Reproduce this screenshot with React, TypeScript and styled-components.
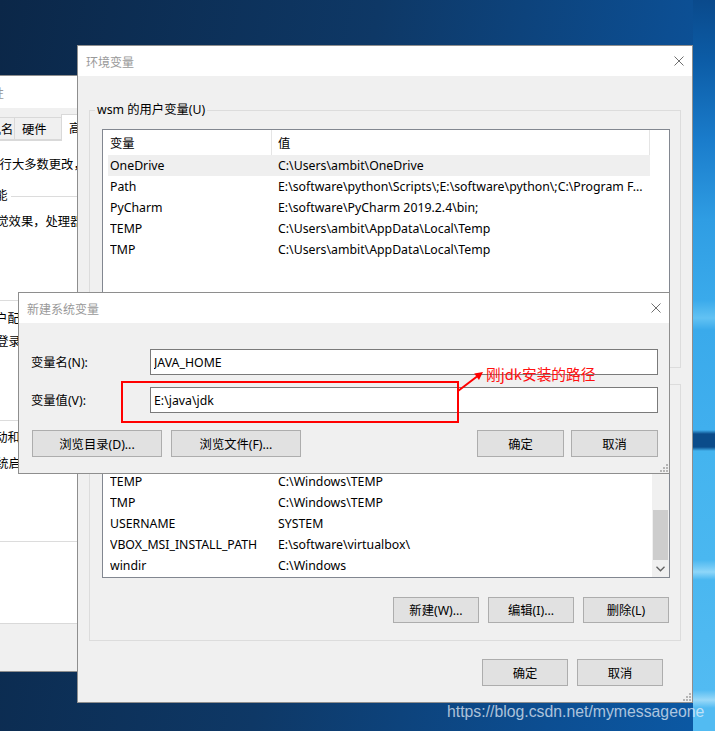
import styled, { createGlobalStyle } from "styled-components"

const GlobalStyle = createGlobalStyle`
  html, body { margin: 0; padding: 0; }
  body {
    font-family: "Noto Sans", "Noto Sans CJK SC", sans-serif;
    font-size: 12.3px;
    color: #000;
  }
  * { box-sizing: border-box; }
`

const Desktop = styled.div`
  position: relative;
  width: 715px;
  height: 731px;
  overflow: hidden;
  background:
    linear-gradient(180deg, #0a4a8c 0px, #0c5ca6 60px, #1a7ccb 140px, #2f9de3 220px, #3aaaeb 300px, #62c2f3 318px, #3aaaeb 330px, #40afee 430px, #0b4c8a 434px, #0b4c8a 447px, #44b4ef 451px, #4ab7f0 560px, #8ed6f9 572px, #4ab7f0 580px, #52bbf2 690px, #9ad9f8 700px, #52bbf2 708px) 693px 0 / 22px 100% no-repeat,
    linear-gradient(100deg, #0b2748 0%, #0e3866 45%, #0c4e92 80%, #0b5aa6 100%);
`

const Window = styled.div<{ $x: number; $y: number; $w: number; $h: number }>`
  position: absolute;
  z-index: 0;
  left: ${p => p.$x}px;
  top: ${p => p.$y}px;
  width: ${p => p.$w}px;
  height: ${p => p.$h}px;
  display: flex;
  flex-direction: column;
  background: #f0f0f0;
  border: 1px solid #8e8e8e;
  overflow: hidden;
  white-space: nowrap;
`

const Caption = styled.div<{ $h: number }>`
  flex: none;
  height: ${p => p.$h}px;
  background: #fff;
  display: flex;
  align-items: center;
  justify-content: space-between;
  padding: 0 8px;
  color: #999;
  font-size: 12px;
  font-family: "Noto Sans CJK SC", sans-serif;
`

const Grip = styled.svg`
  position: absolute;
  right: 1px;
  bottom: 1px;
`

const CloseIcon = () => (
  <svg width="10" height="10" viewBox="0 0 10 10">
    <path d="M0.5 0.5 L9.5 9.5 M9.5 0.5 L0.5 9.5" stroke="#6f6f6f" strokeWidth="1" fill="none" />
  </svg>
)

const ResizeGrip = () => (
  <Grip width="8" height="8" viewBox="0 0 8 8">
    {[[6, 0], [3, 3], [6, 3], [0, 6], [3, 6], [6, 6]].map(([x, y], i) => (
      <rect key={`g-${i}`} x={x} y={y} width="2" height="2" fill="#b5b5b5" />
    ))}
  </Grip>
)

/* ---------- 系统属性 (behind) ---------- */

const TabStrip = styled.div`
  flex: none;
  display: flex;
  align-items: flex-end;
  padding: 6px 0 0 9px;
  height: 32px;
`

const Tab = styled.div<{ $w: number; $active?: boolean }>`
  flex: none;
  width: ${p => p.$w}px;
  height: ${p => (p.$active ? 27 : 23)}px;
  padding-left: 7px;
  display: flex;
  align-items: center;
  background: ${p => (p.$active ? "#fff" : "#f0f0f0")};
  border: 1px solid #d9d9d9;
  border-bottom: ${p => (p.$active ? "none" : "1px solid #d9d9d9")};
  margin-left: -1px;
  margin-bottom: ${p => (p.$active ? "-1px" : "0")};
  position: relative;
  z-index: ${p => (p.$active ? 1 : 0)};
`

const TabPanel = styled.div`
  flex: none;
  height: 484px;
  margin-left: 6px;
  background: #fff;
  border: 1px solid #d9d9d9;
  padding: 16px 0 0 8px;
  display: flex;
  flex-direction: column;
`

const Para = styled.div<{ $indent?: number }>`
  line-height: 16px;
  margin-left: ${p => p.$indent ?? 0}px;
`

const PropGroup = styled.fieldset<{ $h: number; $pt: number; $mt: number }>`
  margin: ${p => p.$mt}px 0 0 0;
  height: ${p => p.$h}px;
  min-width: 0;
  border: 1px solid #dcdcdc;
  padding: ${p => p.$pt}px 0 0 0;
`

const Legend = styled.legend<{ $indent: number }>`
  padding: 0 ${p => (p.$indent > 10 ? 3 : 2)}px;
  margin-left: ${p => p.$indent}px;
  line-height: 16px;
`

/* ---------- 环境变量 ---------- */

const EnvBody = styled.div`
  flex: 1;
  display: flex;
  flex-direction: column;
  padding: 26px 11px 0 11px;
`

const VarGroup = styled.fieldset<{ $h: number; $mt?: number }>`
  margin: ${p => p.$mt ?? 0}px 0 0 0;
  height: ${p => p.$h}px;
  min-width: 0;
  border: 1px solid #dcdcdc;
  padding: 11px 10px 0 0;
  display: flex;
  flex-direction: column;
`

const ListView = styled.div<{ $h: number }>`
  flex: none;
  height: ${p => p.$h}px;
  margin-left: 12px;
  border: 1px solid #828790;
  background: #fff;
  display: flex;
  overflow: hidden;
`

const Table = styled.div`
  flex: 1;
  display: flex;
  flex-direction: column;
  min-width: 0;
`

const Header = styled.div`
  flex: none;
  display: grid;
  grid-template-columns: 169px 378px;
  height: 25px;
`

const HeaderCell = styled.div`
  display: flex;
  align-items: center;
  padding-left: 6px;
  border-right: 1px solid #e5e5e5;
  &:first-child { padding-left: 7px; }
`

const Row = styled.div<{ $selected?: boolean }>`
  flex: none;
  display: grid;
  grid-template-columns: 168px 1fr;
  align-items: center;
  height: 21px;
  width: 542px;
  margin-left: 5px;
  padding-left: 2px;
  background: ${p => (p.$selected ? "#efefef" : "transparent")};
`

const Cell = styled.span`
  overflow: hidden;
`

const ScrollBar = styled.div`
  flex: none;
  width: 17px;
  display: flex;
  flex-direction: column;
  background: #f0f0f0;
`

const ScrollButton = styled.div`
  flex: none;
  height: 17px;
  display: flex;
  align-items: center;
  justify-content: center;
`

const Track = styled.div`
  flex: 1;
  display: flex;
  flex-direction: column;
  justify-content: flex-end;
  padding: 0 1px;
`

const Thumb = styled.div`
  height: 50px;
  background: #cdcdcd;
`

const ButtonRow = styled.div<{ $mt: number; $pr?: number; $gap: number }>`
  flex: none;
  display: flex;
  justify-content: flex-end;
  gap: ${p => p.$gap}px;
  margin-top: ${p => p.$mt}px;
  padding-right: ${p => p.$pr ?? 0}px;
`

const Button = styled.button<{ $w: number; $h?: number }>`
  flex: none;
  width: ${p => p.$w}px;
  height: ${p => p.$h ?? 26}px;
  padding: 0;
  background: #e1e1e1;
  border: 1px solid #adadad;
  font: inherit;
  color: #000;
`

/* ---------- 新建系统变量 ---------- */

const NewBody = styled.div`
  flex: 1;
  display: flex;
  flex-direction: column;
  padding: 26px 11px 0 12px;
`

const FieldRow = styled.div<{ $mt?: number }>`
  display: grid;
  grid-template-columns: 119px 1fr;
  align-items: center;
  margin-top: ${p => p.$mt ?? 0}px;
`

const TextBox = styled.input`
  height: 26px;
  border: 1px solid #7a7a7a;
  background: #fff;
  padding: 0 3px;
  font: inherit;
  color: #000;
  outline: none;
`

const DialogButtons = styled.div`
  display: flex;
  justify-content: space-between;
  margin-top: 17px;
  padding-left: 1px;
`

const ButtonGroup = styled.div<{ $gap: number }>`
  display: flex;
  gap: ${p => p.$gap}px;
`

/* ---------- 标注 ---------- */

const RedBox = styled.div`
  position: absolute;
  left: 121px;
  top: 381px;
  width: 338px;
  height: 42px;
  border: 2px solid #f00;
`

const Arrow = styled.svg`
  position: absolute;
  left: 455px;
  top: 368px;
`

const Note = styled.div`
  position: absolute;
  left: 486px;
  top: 365px;
  color: #ff1010;
  font-family: "Noto Sans CJK SC", sans-serif;
  font-size: 14.7px;
  line-height: 18px;
`

const Watermark = styled.div`
  position: absolute;
  left: 447px;
  top: 702px;
  font-family: "Liberation Sans", Arial, sans-serif;
  font-size: 15.8px;
  line-height: 20px;
  color: rgba(235, 242, 250, 0.72);
`

const userVars = [
  ["OneDrive", "C:\\Users\\ambit\\OneDrive"],
  ["Path", "E:\\software\\python\\Scripts\\;E:\\software\\python\\;C:\\Program F..."],
  ["PyCharm", "E:\\software\\PyCharm 2019.2.4\\bin;"],
  ["TEMP", "C:\\Users\\ambit\\AppData\\Local\\Temp"],
  ["TMP", "C:\\Users\\ambit\\AppData\\Local\\Temp"],
]

const systemVars = [
  ["PROCESSOR_REVISION", "9e09"],
  ["PSModulePath", "%ProgramFiles%\\WindowsPowerShell\\Modules;C:\\WINDOWS\\system32\\..."],
  ["TEMP", "C:\\Windows\\TEMP"],
  ["TMP", "C:\\Windows\\TEMP"],
  ["USERNAME", "SYSTEM"],
  ["VBOX_MSI_INSTALL_PATH", "E:\\software\\virtualbox\\"],
  ["windir", "C:\\Windows"],
]

const VarTable = ({ rows, selected }: { rows: string[][]; selected?: number }) => (
  <Table>
    <Header>
      <HeaderCell>变量</HeaderCell>
      <HeaderCell>值</HeaderCell>
    </Header>
    {rows.map(([name, value], i) => (
      <Row key={`${name}-${i}`} $selected={i === selected}>
        <Cell>{name}</Cell>
        <Cell>{value}</Cell>
      </Row>
    ))}
  </Table>
)

const SystemProperties = () => (
  <Window $x={-53} $y={75} $w={153} $h={597}>
    <Caption $h={32}>
      <span>系统属性</span>
    </Caption>
    <TabStrip>
      <Tab $w={59}>计算机名</Tab>
      <Tab $w={48}>硬件</Tab>
      <Tab $w={48} $active>高级</Tab>
      <Tab $w={70}>系统保护</Tab>
    </TabStrip>
    <TabPanel>
      <Para $indent={12}>要进行大多数更改，你必须作为管理员登录。</Para>
      <PropGroup $h={113} $pt={10} $mt={15}>
        <Legend $indent={16}>性能</Legend>
        <Para $indent={20}>视觉效果，处理器计划，内存使用，以及虚拟内存</Para>
      </PropGroup>
      <PropGroup $h={110} $pt={7} $mt={10}>
        <Legend $indent={16}>用户配置文件</Legend>
        <Para $indent={20}>与登录帐户相关的桌面设置</Para>
      </PropGroup>
      <PropGroup $h={112} $pt={10} $mt={9}>
        <Legend $indent={16}>启动和故障恢复</Legend>
        <Para $indent={20}>系统启动、系统故障和调试信息</Para>
      </PropGroup>
    </TabPanel>
  </Window>
)

const EnvironmentVariables = () => (
  <Window $x={77} $y={45} $w={616} $h={658}>
    <Caption $h={30}>
      <span>环境变量</span>
      <CloseIcon />
    </Caption>
    <EnvBody>
      <VarGroup $h={266}>
        <Legend $indent={5}>wsm 的用户变量(U)</Legend>
        <ListView $h={176}>
          <VarTable rows={userVars} selected={0} />
        </ListView>
        <ButtonRow $mt={19} $pr={1} $gap={9}>
          <Button $w={86}>新建(N)...</Button>
          <Button $w={86}>编辑(E)...</Button>
          <Button $w={86}>删除(D)</Button>
        </ButtonRow>
      </VarGroup>
      <VarGroup $h={265} $mt={8}>
        <Legend $indent={5}>系统变量(S)</Legend>
        <ListView $h={175}>
          <VarTable rows={systemVars} />
          <ScrollBar>
            <ScrollButton />
            <Track>
              <Thumb />
            </Track>
            <ScrollButton>
              <svg width="9" height="6" viewBox="0 0 9 6">
                <path d="M0.5 0.8 L4.5 4.8 L8.5 0.8" stroke="#606060" strokeWidth="1.3" fill="none" />
              </svg>
            </ScrollButton>
          </ScrollBar>
        </ListView>
        <ButtonRow $mt={19} $pr={1} $gap={9}>
          <Button $w={86}>新建(W)...</Button>
          <Button $w={86}>编辑(I)...</Button>
          <Button $w={86}>删除(L)</Button>
        </ButtonRow>
      </VarGroup>
      <ButtonRow $mt={18} $pr={18} $gap={9}>
        <Button $w={86} $h={27}>确定</Button>
        <Button $w={86} $h={27}>取消</Button>
      </ButtonRow>
    </EnvBody>
    <ResizeGrip />
  </Window>
)

const NewSystemVariable = () => (
  <Window $x={18} $y={292} $w={652} $h={182}>
    <Caption $h={30}>
      <span>新建系统变量</span>
      <CloseIcon />
    </Caption>
    <NewBody>
      <FieldRow>
        <span>变量名(N):</span>
        <TextBox readOnly value="JAVA_HOME" />
      </FieldRow>
      <FieldRow $mt={12}>
        <span>变量值(V):</span>
        <TextBox readOnly value="E:\java\jdk" />
      </FieldRow>
      <DialogButtons>
        <ButtonGroup $gap={9}>
          <Button $w={130} $h={27}>浏览目录(D)...</Button>
          <Button $w={130} $h={27}>浏览文件(F)...</Button>
        </ButtonGroup>
        <ButtonGroup $gap={7}>
          <Button $w={87} $h={27}>确定</Button>
          <Button $w={87} $h={27}>取消</Button>
        </ButtonGroup>
      </DialogButtons>
    </NewBody>
    <ResizeGrip />
  </Window>
)

export default function App() {
  return (
    <>
      <GlobalStyle />
      <Desktop>
        <SystemProperties />
        <EnvironmentVariables />
        <NewSystemVariable />
        <RedBox />
        <Arrow width="32" height="28" viewBox="0 0 32 28">
          <path d="M3 23 L22 8.5" stroke="#f00" strokeWidth="2" fill="none" />
          <path d="M28 4 L23.97 11.97 L19.22 5.53 Z" fill="#f00" />
        </Arrow>
        <Note>刚jdk安装的路径</Note>
        <Watermark>https://blog.csdn.net/mymessageone</Watermark>
      </Desktop>
    </>
  )
}
